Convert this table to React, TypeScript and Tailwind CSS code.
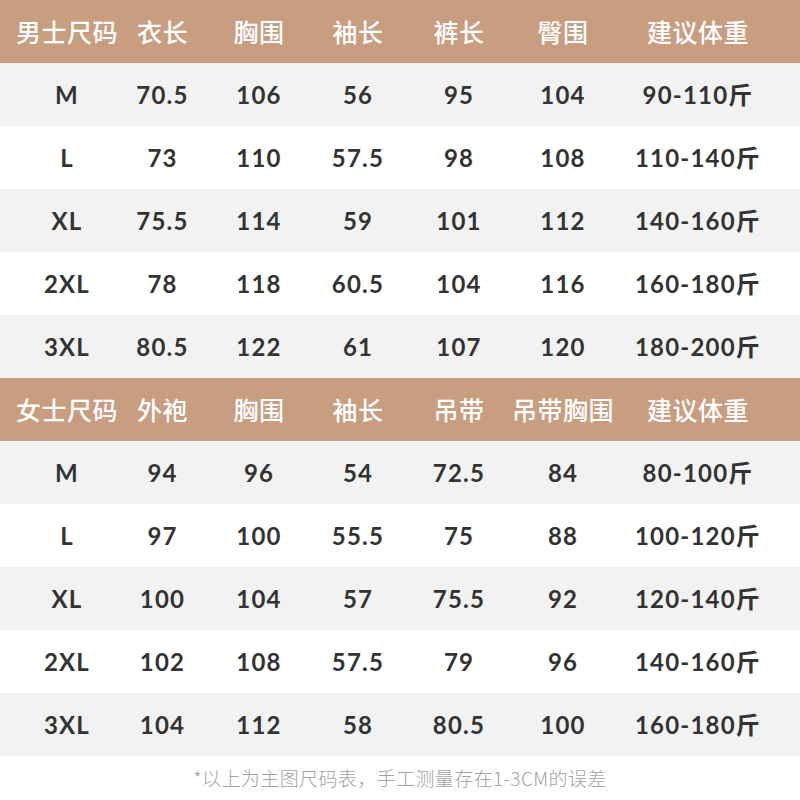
const men = {
  head: ["男士尺码", "衣长", "胸围", "袖长", "裤长", "臀围", "建议体重"],
  rows: [
    ["M", "70.5", "106", "56", "95", "104", "90-110斤"],
    ["L", "73", "110", "57.5", "98", "108", "110-140斤"],
    ["XL", "75.5", "114", "59", "101", "112", "140-160斤"],
    ["2XL", "78", "118", "60.5", "104", "116", "160-180斤"],
    ["3XL", "80.5", "122", "61", "107", "120", "180-200斤"],
  ],
};

const women = {
  head: ["女士尺码", "外袍", "胸围", "袖长", "吊带", "吊带胸围", "建议体重"],
  rows: [
    ["M", "94", "96", "54", "72.5", "84", "80-100斤"],
    ["L", "97", "100", "55.5", "75", "88", "100-120斤"],
    ["XL", "100", "104", "57", "75.5", "92", "120-140斤"],
    ["2XL", "102", "108", "57.5", "79", "96", "140-160斤"],
    ["3XL", "104", "112", "58", "80.5", "100", "160-180斤"],
  ],
};

// per-column padding so the centres land where the chart has them
const colPad = ["pl-[19px]", "", "", "", "", "pr-[14px]", "pr-[34px]"];

const Row = ({ cells, className, textClass }: { cells: string[]; className: string; textClass: string }) => (
  <div className={`grid grid-cols-[115px_95px_98px_100px_102px_120px_170px] h-[63px] items-center ${className}`}>
    {cells.map((c, i) => (
      <div key={i} className={`flex justify-center whitespace-nowrap ${colPad[i]} ${textClass}`}>
        {c}
      </div>
    ))}
  </div>
);

const Table = ({ data }: { data: { head: string[]; rows: string[][] } }) => (
  <div>
    <Row
      cells={data.head}
      className="bg-[#c89d80]"
      textClass="text-white text-[25px] font-medium font-['Noto_Sans_CJK_SC',sans-serif] tracking-[0.5px]"
    />
    {data.rows.map((r, i) => (
      <Row
        key={i}
        cells={r}
        className={i % 2 === 0 ? "bg-[#f2f2f2]" : "bg-white"}
        textClass="text-[#333333] text-[24px] font-bold tracking-[1.2px] font-['Lato','Noto_Sans_CJK_SC',sans-serif]"
      />
    ))}
  </div>
);

export default function App() {
  return (
    <div className="w-[800px] h-[800px] bg-white overflow-hidden">
      <Table data={men} />
      <Table data={women} />
      <div className="h-[44px] flex items-center justify-center text-[#a3a3a3] text-[19px] tracking-[0.4px] font-light font-['Noto_Sans_CJK_SC',sans-serif]">
        *以上为主图尺码表，手工测量存在1-3CM的误差
      </div>
    </div>
  );
}
